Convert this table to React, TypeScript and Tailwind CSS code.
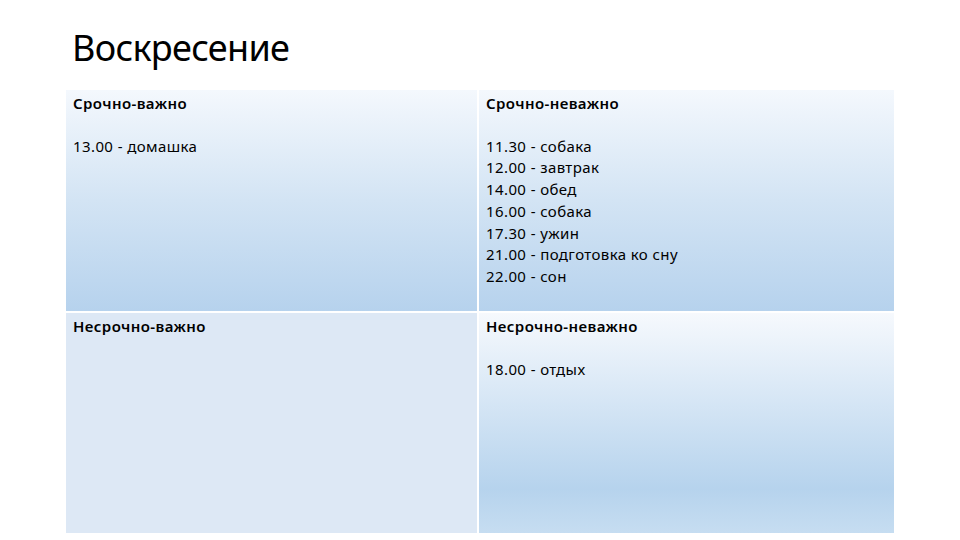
export default function App() {
  return (
    <div className="h-[540px] w-[960px] overflow-hidden bg-white font-['Noto_Sans',sans-serif] text-black">
      <h1 className="ml-[72px] pt-[24px] text-[36px] leading-[48px] tracking-[-0.7px]">Воскресение</h1>
      <div className="ml-[66px] mt-[18px] grid h-[443px] w-[828px] grid-cols-[411px_415px] grid-rows-[221px_220px] gap-[2px] bg-white">
        <Cell title="Срочно-важно" lines={["13.00 - домашка"]} className="bg-gradient-to-b from-[#f4f8fd] via-[#d3e4f4] to-[#b6d2ed]" />
        <Cell
          title="Срочно-неважно"
          lines={[
            "11.30 - собака",
            "12.00 - завтрак",
            "14.00 - обед",
            "16.00 - собака",
            "17.30 - ужин",
            "21.00 - подготовка ко сну",
            "22.00 - сон",
          ]}
          className="bg-gradient-to-b from-[#f4f8fd] via-[#d3e4f4] to-[#b6d2ed]"
        />
        <Cell title="Несрочно-важно" lines={[]} className="bg-[#dde8f5]" />
        <Cell
          title="Несрочно-неважно"
          lines={["18.00 - отдых"]}
          className="bg-gradient-to-b from-[#f6f9fd] via-[#b6d3ed] via-80% to-[#c6ddf1]"
        />
      </div>
    </div>
  );
}

function Cell({ title, lines, className }: { title: string; lines: string[]; className: string }) {
  return (
    <div className={`px-[7px] pt-[3px] text-[15px] leading-[21.7px] tracking-[0.4px] ${className}`}>
      <div className="font-semibold">{title}</div>
      <div className="mt-[21px]">
        {lines.map((l) => (
          <div key={l}>{l}</div>
        ))}
      </div>
    </div>
  );
}
